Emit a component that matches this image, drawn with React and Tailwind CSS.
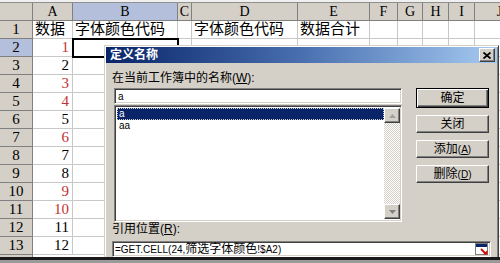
import React from 'react'

const cols = [
  { k: 'A', w: 'w-[40px]' },
  { k: 'B', w: 'w-[105px]', sel: true },
  { k: 'C', w: 'w-[14px]' },
  { k: 'D', w: 'w-[106px]' },
  { k: 'E', w: 'w-[72px]' },
  { k: 'F', w: 'w-[28px]' },
  { k: 'G', w: 'w-[25px]' },
  { k: 'H', w: 'w-[26px]' },
  { k: 'I', w: 'w-[26px]' },
  { k: 'J', w: 'w-[50px]' },
]

const redRows = [1, 3, 4, 6, 9, 10]

function rowData(r) {
  if (r === 1) return { A: '数据', B: '字体颜色代码', D: '字体颜色代码', E: '数据合计' }
  return { A: String(r - 1) }
}

const raised =
  'bg-[#d4d0c8] border border-t-white border-l-white border-r-[#404040] border-b-[#404040] shadow-[inset_-1px_-1px_0_#808080]'
const sunken =
  'bg-white border border-t-[#808080] border-l-[#808080] border-r-white border-b-white shadow-[inset_1px_1px_0_#404040,inset_-1px_-1px_0_#d4d0c8]'

function Sheet() {
  const rows = Array.from({ length: 13 }, (_, i) => i + 1)
  return (
    <div className="font-['Liberation_Serif','Noto_Sans_CJK_SC',serif] text-black">
      <div className="h-[3px] bg-[#f0f0f0] border-b border-[#909090]" />
      {/* column headers */}
      <div className="flex h-[18px]">
        <div className="w-[33px] shrink-0 bg-[#d4d0c8] border-r border-b border-[#808080]" />
        {cols.map((c) => (
          <div
            key={c.k}
            className={`${c.w} shrink-0 border-r border-b border-[#808080] text-center text-[14px] leading-[17px] ${
              c.sel ? 'bg-[#b3bfdb]' : 'bg-[#d4d0c8]'
            }`}
          >
            {c.k}
          </div>
        ))}
      </div>
      {rows.map((r) => {
        const d = rowData(r)
        return (
          <div key={r} className="flex h-[18px]">
            <div
              className={`w-[33px] shrink-0 border-r border-b border-[#808080] text-center text-[15px] leading-[17px] ${
                r === 2 ? 'bg-[#b3bfdb]' : 'bg-[#d4d0c8]'
              }`}
            >
              {r}
            </div>
            {cols.map((c) => {
              const isA = c.k === 'A'
              const num = isA && r > 1
              const red = num && redRows.includes(r - 1)
              const selected = c.k === 'B' && r === 2
              return (
                <div
                  key={c.k}
                  className={`${c.w} shrink-0 bg-white border-r border-b border-[#c8c8c8] text-[15px] leading-[17px] whitespace-nowrap overflow-visible ${
                    num ? 'text-right pr-[3px]' : 'pl-[2px]'
                  } ${red ? 'text-[#c23232]' : ''} ${selected ? 'relative z-10 outline-2 outline-black -outline-offset-1' : ''}`}
                >
                  {d[c.k] || ''}
                </div>
              )
            })}
          </div>
        )
      })}
      {/* partly visible next row */}
      <div className="flex h-[18px]">
        <div className="w-[33px] shrink-0 bg-[#d4d0c8] border-r border-[#808080]" />
        <div className="flex-1 bg-white" />
      </div>
    </div>
  )
}

function CollapseIcon() {
  return (
    <svg width="14" height="13" viewBox="0 0 14 13">
      <rect x="0.5" y="0.5" width="12" height="11" fill="#fff" stroke="#808080" />
      <rect x="1" y="1" width="11" height="3" fill="#0a246a" />
      <path d="M6 6 L11 11" stroke="#d01010" strokeWidth="2" />
      <path d="M8 11.5 L12.5 11.5 L12.5 7 Z" fill="#d01010" />
    </svg>
  )
}

function Dialog() {
  return (
    <div className="absolute left-[104px] top-[45px] w-[395px] h-[230px] z-20 bg-[#d4d0c8] border border-t-[#d4d0c8] border-l-[#d4d0c8] border-r-[#404040] border-b-[#404040] shadow-[inset_1px_1px_0_#fff,inset_-1px_-1px_0_#808080] p-[1px] font-['Liberation_Sans','Noto_Sans_CJK_SC',sans-serif] text-black">
      {/* title bar */}
      <div className="h-[16px] flex items-center justify-between bg-linear-to-r from-[#0a246a] via-[#4a6fb0] to-[#a6caf0]">
        <span className="pl-[4px] text-[12px] leading-[16px] font-bold text-white">定义名称</span>
        <div className={`${raised} w-[16px] h-[14px] mr-[2px] flex items-center justify-center`}>
          <svg width="8" height="7" viewBox="0 0 8 7">
            <path d="M0.5 0.5 L7.5 6.5 M7.5 0.5 L0.5 6.5" stroke="#000" strokeWidth="1.8" />
          </svg>
        </div>
      </div>

      <div className="px-[6px]">
        <div className="flex">
          <div className="w-[290px] pt-[8px]">
            <div className="h-[14px] text-[12px] leading-[14px] whitespace-nowrap">
              在当前工作簿中的名称(<u>W</u>):
            </div>
            <div className={`${sunken} ml-[2px] mt-[3px] h-[16px] flex items-center pl-[3px] text-[10px]`}>a</div>
            <div className={`${sunken} ml-[2px] mt-[1px] h-[117px] flex p-[2px] pr-[1px]`}>
              <div className="flex-1 text-[10px] leading-[12px]">
                <div className="h-[12px] bg-[#0a246a] text-white pl-[2px] outline-1 outline-dotted outline-[#d4d0c8] -outline-offset-1">
                  a
                </div>
                <div className="h-[12px] pl-[2px]">aa</div>
              </div>
              <div className="w-[16px] flex flex-col">
                <div className={`${raised} h-[15px] flex items-center justify-center`}>
                  <svg width="7" height="4" viewBox="0 0 7 4">
                    <path d="M0 4 L3.5 0 L7 4 Z" fill="#a0a0a0" />
                  </svg>
                </div>
                <div className="flex-1 bg-[repeating-conic-gradient(#d4d0c8_0_25%,#ffffff_0_50%)] bg-[length:2px_2px]" />
                <div className={`${raised} h-[15px] flex items-center justify-center`}>
                  <svg width="7" height="4" viewBox="0 0 7 4">
                    <path d="M0 0 L3.5 4 L7 0 Z" fill="#808080" />
                  </svg>
                </div>
              </div>
            </div>
          </div>

          <div className="ml-[14px] w-[73px] pt-[25px] flex flex-col gap-[7px] text-[12px]">
            <div className="h-[20px] flex items-center justify-center bg-[#d4d0c8] border border-black shadow-[inset_1px_1px_0_#fff,inset_-1px_-1px_0_#404040,inset_-2px_-2px_0_#808080]">
              确定
            </div>
            <div className={`${raised} h-[18px] flex items-center justify-center`}>关闭</div>
            <div className={`${raised} h-[18px] flex items-center justify-center`}>
              添加<span className="text-[10px]">(<u>A</u>)</span>
            </div>
            <div className={`${raised} h-[18px] flex items-center justify-center`}>
              删除<span className="text-[10px]">(<u>D</u>)</span>
            </div>
          </div>
        </div>

        <div className="h-[14px] text-[12px] leading-[14px] whitespace-nowrap">
          引用位置(<u>R</u>):
        </div>
        <div className={`${sunken} mt-[5px] h-[16px] flex items-center justify-between pl-[2px] pr-[1px]`}>
          <span className="whitespace-nowrap leading-[12px]">
            <span className="text-[10px]">=GET.CELL(24,</span>
            <span className="text-[12px]">筛选字体颜色</span>
            <span className="text-[10px]">!$A2)</span>
          </span>
          <CollapseIcon />
        </div>
      </div>
    </div>
  )
}

export default function App() {
  return (
    <div className="w-[500px] h-[263px] overflow-hidden bg-white flex flex-col">
      <div className="relative h-[257px] shrink-0 overflow-hidden">
        <Sheet />
        <Dialog />
      </div>
      <div className="h-[3px] bg-[#1a1a1a]" />
      <div className="h-[3px] bg-[#9a9a9a]" />
    </div>
  )
}
